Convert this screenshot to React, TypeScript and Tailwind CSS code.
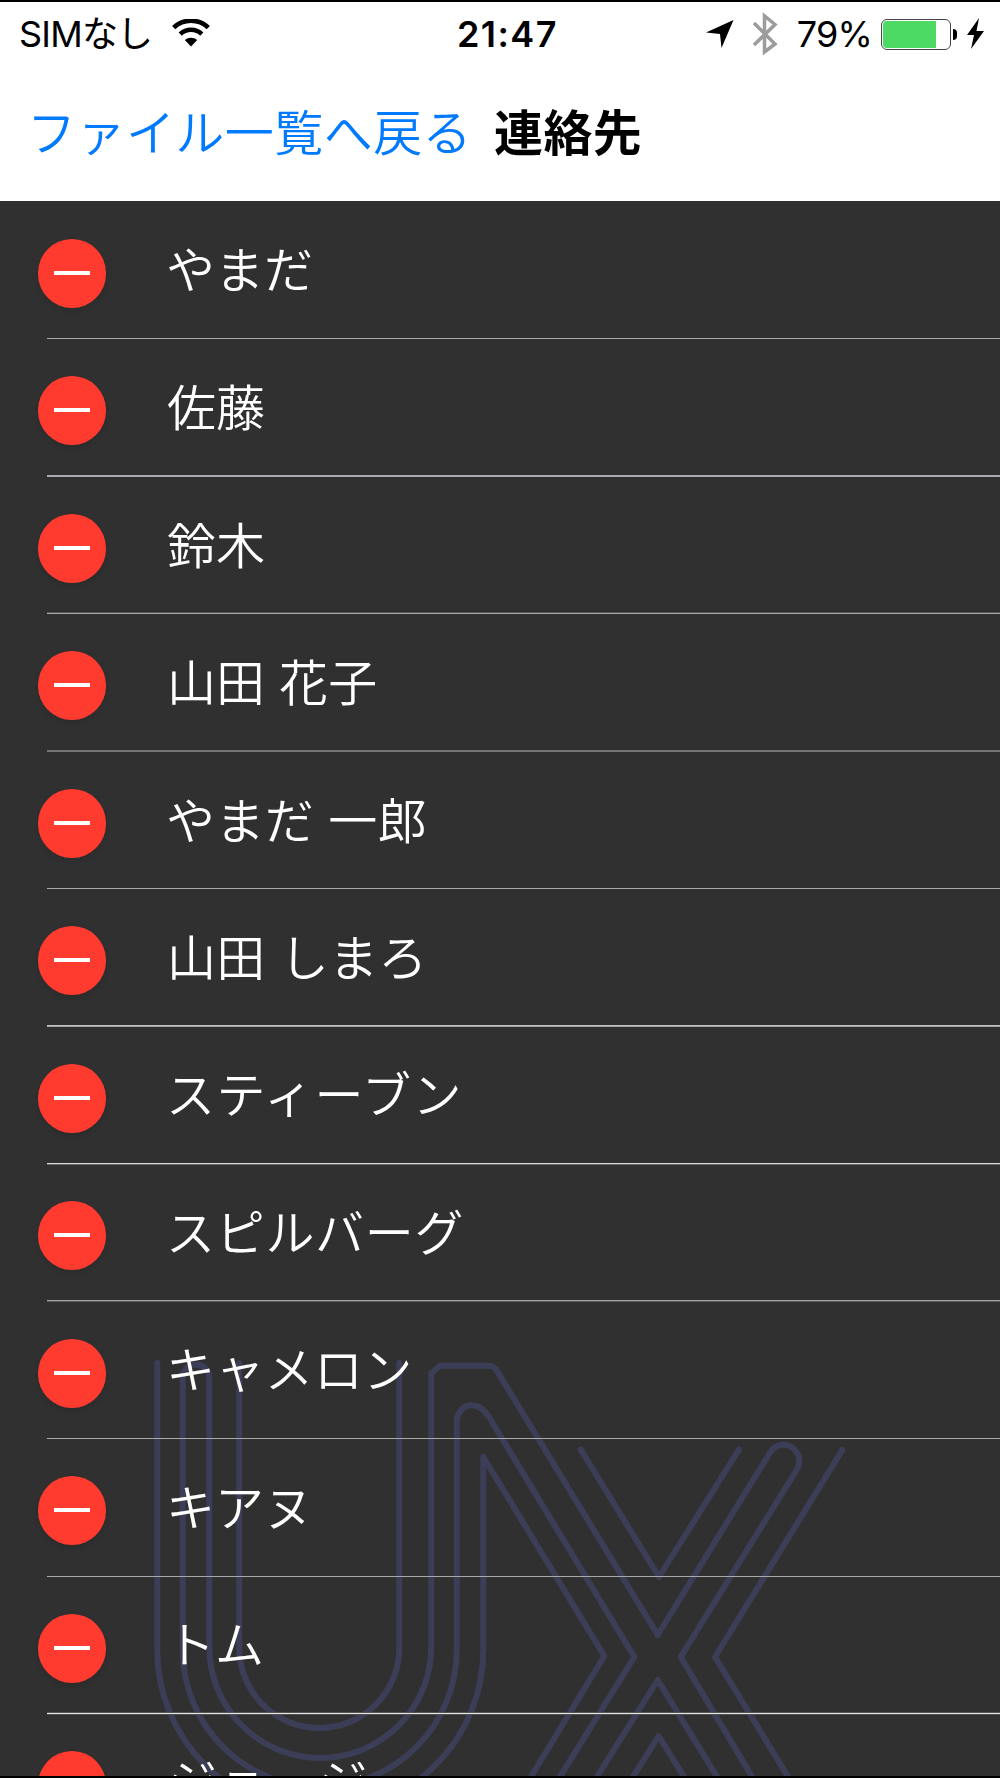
const names = [
  { text: 'やまだ', row: 'h-[138px] pt-[38px]', lines: ['bg-[#a8aaa9]'], label: '-ml-px' },
  { text: '佐藤', row: 'h-[138px] pt-[37px]', lines: ['bg-[#a8acb0]', 'bg-[#a8acb0]'], label: 'mt-px' },
  { text: '鈴木', row: 'h-[137px] pt-[37px]', lines: ['bg-[#555555]', 'bg-[#a8aaa9]'], label: 'mt-px' },
  { text: '山田 花子', row: 'h-[138px] pt-[37px]', lines: ['bg-[#757476]', 'bg-[#757476]'], label: 'mt-px tracking-[0.1px]' },
  { text: 'やまだ 一郎', row: 'h-[137px] pt-[37px]', lines: ['bg-[#a8aaa9]'], label: 'mt-px -ml-px tracking-[0.4px]' },
  { text: '山田 しまろ', row: 'h-[138px] pt-[37px]', lines: ['bg-[#c4c0c4]', 'bg-[#a4a2a5]'], label: 'mt-px tracking-[0.3px]' },
  { text: 'スティーブン', row: 'h-[138px] pt-[37px]', lines: ['bg-[#d8d8d8]', 'bg-[#66686a]'], label: '-ml-px tracking-[1.5px]' },
  { text: 'スピルバーグ', row: 'h-[137px] pt-[36px]', lines: ['bg-[#a3a3a3]', 'bg-[#5c5c5c]'], label: 'mt-px -ml-px tracking-[0.7px]' },
  { text: 'キャメロン', row: 'h-[137px] pt-[37px]', lines: ['bg-[#a8aaa9]'], label: '-ml-px tracking-[0.3px]' },
  { text: 'キアヌ', row: 'h-[138px] pt-[37px]', lines: ['bg-[#a8aaa9]'], label: 'mt-px -ml-px' },
  { text: 'トム', row: 'h-[138px] pt-[37px]', lines: ['bg-[#555555]', 'bg-[#e4e4e4]', 'bg-[#505050]'], label: '-ml-px' },
  { text: 'ジョージ', row: 'h-[138px] pt-[36px]', lines: [], label: 'ml-px tracking-[1.5px]' },
];

function Watermark() {
  return (
    <svg
      width="1000"
      height="1778"
      viewBox="0 0 1000 1778"
      fill="none"
      stroke="#3c3e58"
      strokeWidth="6"
      strokeLinecap="round"
      strokeLinejoin="round"
    >
      <path d="M157.3 1363V1650A163 163 0 0 0 483.3 1650V1457L604.3 1656L529 1780" />
      <path d="M239.3 1363V1648A80 80 0 0 0 399.3 1648V1363" />
      <path d="M209.3 1647A111 111 0 0 0 431.3 1647V1373L440 1365.7H489Q494 1365.7 497 1371L657.7 1635L771 1451C777 1443 788 1443 794 1449C801 1456 801 1463 796 1471L680.7 1657L754 1780" />
      <path d="M209.3 1647V1378C209.3 1360 182.7 1360 182.7 1378V1650A137 137 0 0 0 456.7 1650V1419C461 1402 478 1400 489 1417L634.3 1657L558 1780" />
      <path d="M580.7 1449.5L659 1577L739 1449.5M842.3 1450L715 1657L790 1780" />
      <path d="M595 1780L657.7 1680L719 1780M631 1780L658.7 1736L686 1780" />
    </svg>
  );
}

function StatusBar() {
  return (
    <div className="flex h-[64px] items-center pl-[19px] pr-[16px] text-[36px] leading-none">
      <div className="flex w-[438px] items-center">
        <span className="tracking-[-0.8px]">SIMなし</span>
        <svg className="ml-[20px] -mt-[2px]" width="38" height="28" viewBox="0 0 38 28" fill="none" stroke="#000">
          <path d="M1.7 8.6A25 25 0 0 1 36.3 8.6" strokeWidth="4.6" />
          <path d="M8.2 15.2A15.5 15.5 0 0 1 29.8 15.2" strokeWidth="4.6" />
          <path d="M12.8 21A9.5 9.5 0 0 1 25.2 21L19 27.5Z" fill="#000" stroke="none" />
        </svg>
      </div>
      <span className="font-semibold tracking-[1.4px]">21:47</span>
      <div className="ml-auto flex items-center">
        <svg width="28" height="28" viewBox="0 0 28 28">
          <path d="M27.5 0L15.5 28L14 14L0 12.5Z" />
        </svg>
        <svg className="ml-[18px] -mt-px" width="26" height="44" viewBox="0 0 26 44" fill="none" stroke="#9c9c9c" strokeWidth="3.5">
          <path d="M2 11L23 32L12.5 40V4L23 12.5L2 33" />
        </svg>
        <span className="ml-[19px] font-normal tracking-[-0.8px]">79%</span>
        <div className="ml-[9px] h-[31px] w-[70px] rounded-[6px] border border-[#444] p-px">
          <div className="h-full w-[53px] rounded-l-[4px] bg-[#4cd964]" />
        </div>
        <div className="ml-[2px] h-[11px] w-[4px] rounded-r-full bg-black" />
        <svg className="-mt-px ml-[10px]" width="17" height="31" viewBox="0 0 17 31">
          <path d="M12 0L0 17H7L4 31L17 13H9.5Z" />
        </svg>
      </div>
    </div>
  );
}

export default function App() {
  return (
    <div className="relative flex h-[1778px] w-[1000px] flex-col overflow-hidden border-y-2 border-black bg-[#303030] font-['Inter','Noto_Sans_CJK_JP',sans-serif]">
      <header className="h-[199px] shrink-0 bg-white text-black">
        <StatusBar />
        <nav className="flex items-center pl-[27px] pt-[32px] text-[49px] leading-[72px]">
          <a className="font-[350] tracking-[0.45px] text-[#007aff]">ファイル一覧へ戻る</a>
          <h1 className="ml-[22px] font-bold tracking-[0.4px]">連絡先</h1>
        </nav>
      </header>
      <main className="flex flex-col">
        <div className="pointer-events-none absolute -top-[2px] left-0">
          <Watermark />
        </div>
        {names.map(({ text, row, lines, label }) => (
          <div key={text} className={`relative flex shrink-0 items-start pl-[37.7px] ${row}`}>
            <button className="flex size-[68.8px] shrink-0 items-center justify-center rounded-full bg-[#ff3b30] shadow-[0_3px_5px_rgba(0,0,0,0.10)]">
              <span className="h-[4px] w-[36px] bg-white" />
            </button>
            <div className="-mt-[4px] ml-[60.5px] whitespace-pre text-[49px] font-[350] leading-[72px] text-white">
              <span className={`block ${label}`}>{text}</span>
            </div>
            <div className="absolute bottom-0 left-[47px] right-0">
              {lines.map((color, i) => (
                <div key={i} className={`h-px ${color}`} />
              ))}
            </div>
          </div>
        ))}
      </main>
    </div>
  );
}
